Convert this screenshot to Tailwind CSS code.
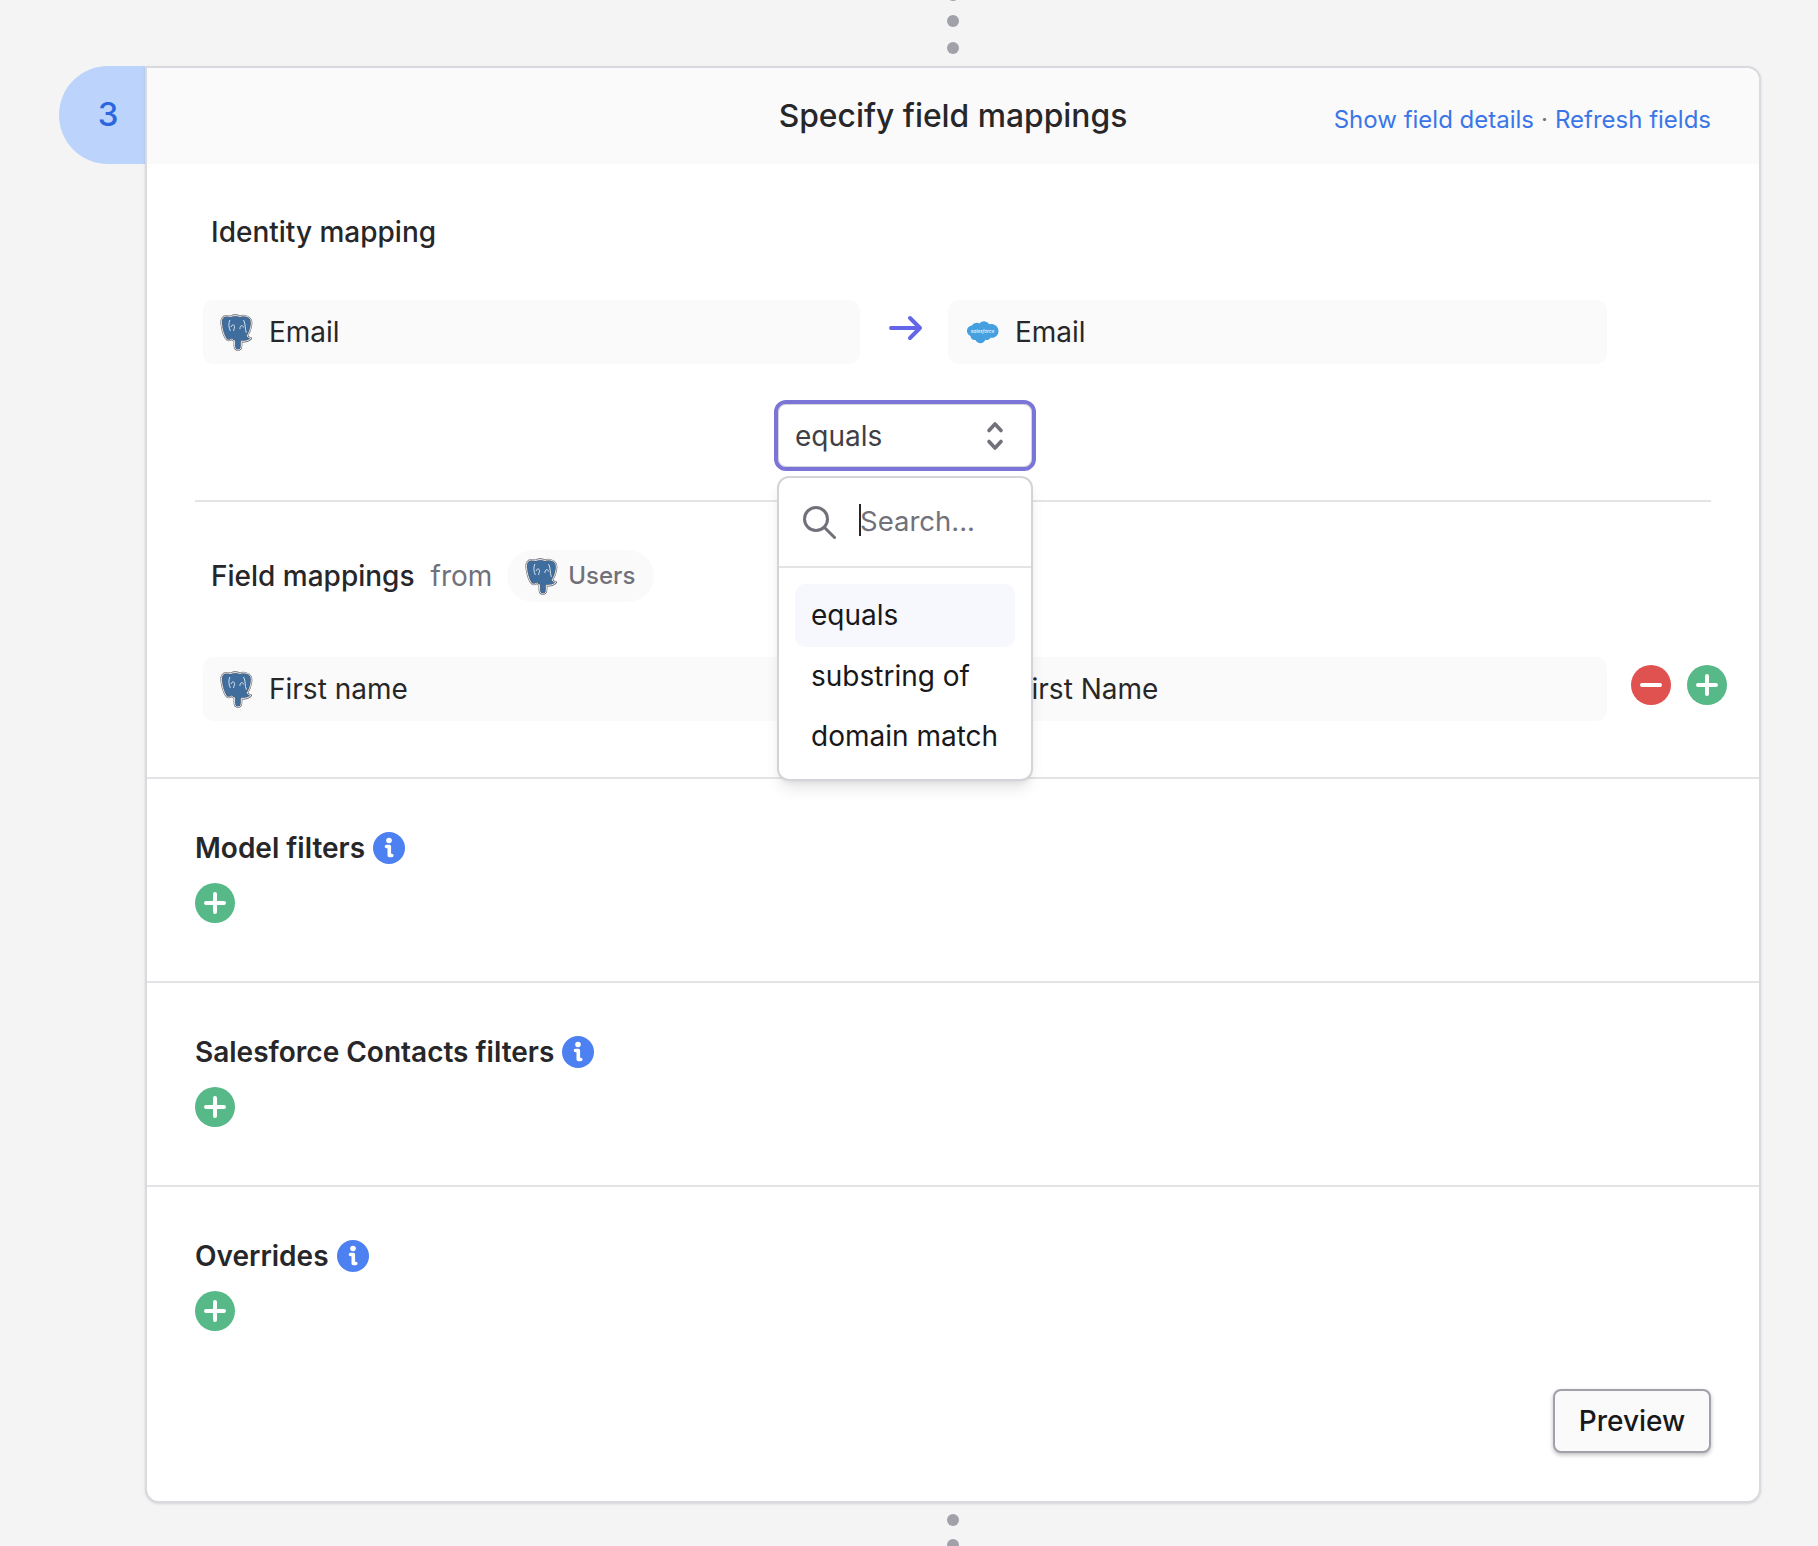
<!DOCTYPE html>
<html lang="en">
<head>
  <meta charset="UTF-8">
  <title>Specify field mappings</title>
  <script src="https://cdn.jsdelivr.net/npm/@tailwindcss/browser@4"></script>
</head>
<body class="bg-[#f4f4f4] font-['Inter',sans-serif] text-[#27272a] h-[1546px] overflow-hidden">
<!-- icon defs -->
<svg class="hidden">
  <symbol id="pg" viewBox="0 0 34 38">
    <path d="M7 2C3 2 1 5 1.500 10 2 15 3.500 21 6 25 7.500 27.500 10.500 27.500 12 25.500 13 27 14 27.500 15 27.500L15 32.500C15 35.500 16.500 37 18.500 37 20.500 37 22 35.500 22 32L22 28C25.500 28.500 30 27.500 32 25 30 24.500 28.500 24 28 22.500 31.500 17 33.500 9 31.500 5.500 29.500 2 24 1 20.500 2.500 17.500 1.200 13.500 1.200 11.500 2.500 10 2.200 8.500 2 7 2Z" fill="#3f6d9e" stroke="#5a5f6b" stroke-width="2" stroke-linejoin="round"/>
    <path d="M7 2C3 2 1 5 1.500 10 2 15 3.500 21 6 25 7.500 27.500 10.500 27.500 12 25.500 13 27 14 27.500 15 27.500L15 32.500C15 35.500 16.500 37 18.500 37 20.500 37 22 35.500 22 32L22 28C25.500 28.500 30 27.500 32 25 30 24.500 28.500 24 28 22.500 31.500 17 33.500 9 31.500 5.500 29.500 2 24 1 20.500 2.500 17.500 1.200 13.500 1.200 11.500 2.500 10 2.200 8.500 2 7 2Z" fill="none" stroke="#fff" stroke-width=".9" stroke-linejoin="round"/>
    <path d="M10 6.500C8.500 10 9 14 10.500 17M11.500 13C12 10.500 15 10.500 15 13 15 15 14 15.500 14 17M24.500 6.500C26.500 10 25.500 15 27 19M20.500 15C20.500 11 24 11 24 13.500" fill="none" stroke="#fff" stroke-width=".8" stroke-linecap="round"/>
  </symbol>
  <symbol id="plus" viewBox="0 0 40 40">
    <circle cx="20" cy="20" r="20" fill="#57b888"/>
    <path d="M20 11v18M11 20h18" stroke="#fff" stroke-width="4" stroke-linecap="round"/>
  </symbol>
  <symbol id="info" viewBox="0 0 32 32">
    <circle cx="16" cy="16" r="16" fill="#4d80f0"/>
    <circle cx="16" cy="8.500" r="2.800" fill="#fff"/>
    <path d="M13.500 14.500h2.800v9h2.500" fill="none" stroke="#fff" stroke-width="3.600" stroke-linecap="round" stroke-linejoin="round"/>
  </symbol>
</svg>

<!-- dots above -->
<div class="ml-[145px] w-[1616px] h-[66px] overflow-hidden flex flex-col items-center justify-end pb-[12px]">
  <span class="w-3 h-3 shrink-0 rounded-full bg-[#a1a1aa] mb-[14px]"></span>
  <span class="w-3 h-3 shrink-0 rounded-full bg-[#a1a1aa] mb-[15px]"></span>
  <span class="w-3 h-3 shrink-0 rounded-full bg-[#a1a1aa]"></span>
</div>

<div class="flex items-start pl-[59px]">
  <!-- step number -->
  <div class="w-[86px] h-[98px] shrink-0 bg-[#bcd4fb] rounded-l-[50px] flex items-center justify-center pl-[12px] text-[33px] font-medium text-[#2b66e0]">3</div>

  <!-- card -->
  <div class="w-[1616px] shrink-0 h-[1437px] bg-white border-2 border-[#d9d9df] rounded-r-[14px] rounded-bl-[14px] shadow-sm">
    <div class="relative h-[96px] bg-[#fafafa] rounded-tr-[14px] flex items-center justify-center">
      <h1 class="text-[31.800px] font-medium">Specify field mappings</h1>
      <div class="absolute right-[48px] top-[36px] text-[24px] leading-[32px] text-[#3b76e8]">Show field details<span class="text-[#71717a] mx-[7px]">·</span>Refresh fields</div>
    </div>

    <div class="relative px-[48px] h-[613px]">
      <h2 class="pl-[16px] pt-[50px] text-[28px] font-medium leading-[36px]">Identity mapping</h2>

      <div class="flex items-start mt-[50px] ml-[8px]">
        <div class="w-[657px] shrink-0 h-[64px] rounded-[10px] bg-[#fafafa] flex items-center pl-[17px] gap-[16px] text-[28px]">
          <svg class="w-[33px] h-[37px]"><use href="#pg"/></svg>Email
        </div>
        <div class="w-[88px] shrink-0 h-[64px] flex justify-center pt-[15px] pl-[3px]">
          <svg width="34" height="26" viewBox="0 0 34 26" fill="none" stroke="#6366e8" stroke-width="4" stroke-linecap="round" stroke-linejoin="round"><path d="M2 13h29M21 3l10 10-10 10"/></svg>
        </div>
        <div class="w-[659px] shrink-0 h-[64px] rounded-[10px] bg-[#fafafa] flex items-center pl-[18px] gap-[16px] text-[28px]">
          <svg width="33" height="24" viewBox="0 0 33 24" class="shrink-0">
            <path d="M13.500 3.500C15 1.800 17 1 19 1.400 21 1.800 22.500 3 23.300 4.200 27 3.200 32.500 5.500 32.500 11 32.500 16 28 18.500 24.500 17.700 23.500 19.700 21 20.600 19.300 19.800 18.500 22 16.500 23.500 14 23.300 11.500 23 10 21.500 9.500 20 7 20.500 4.500 18.500 4.500 16 2 15 .5 12.500 1 10 1.500 7 4 5.500 6 5.500 7.500 2.500 11.500 2 13.500 3.500Z" fill="#45a0e0"/>
            <text x="16.500" y="13" text-anchor="middle" font-size="4.800" fill="#fff" font-style="italic">salesforce</text>
          </svg>Email
        </div>
      </div>

      <!-- select + dropdown -->
      <div class="absolute left-[627px] top-[236px] w-[262px]">
        <div class="h-[71px] rounded-[12px] border-[4px] border-[#7c75d8] bg-white shadow-[inset_0_0_0_1px_#d4d4d8] flex items-center justify-between pl-[17px] pr-[28px] text-[28px] text-[#3f3f46]">
          equals
          <svg width="18" height="30" viewBox="0 0 18 30" fill="none" stroke="#71717a" stroke-width="3.600" stroke-linecap="round" stroke-linejoin="round"><path d="M3 9.500 9 3l6 6.500M3 20.500 9 27l6-6.500"/></svg>
        </div>
        <div class="absolute z-10 left-[3px] top-[76px] w-[256px] h-[305px] rounded-[12px] border-2 border-[#d4d4d8] bg-white shadow-lg">
          <div class="relative h-[90px] border-b-2 border-[#e4e4e7] flex items-center pl-[23px] gap-[24px] text-[27.500px] text-[#71717a]">
            <svg width="34" height="34" viewBox="0 0 34 34" fill="none" stroke="#71717a" stroke-width="3" stroke-linecap="round"><circle cx="14" cy="14" r="11.500"/><path d="m22.500 22.500 10 10"/></svg>
            <span class="relative">Search...<span class="absolute -left-[1px] top-[3px] w-[2px] h-[32px] bg-[#27272a]"></span></span>
          </div>
          <div class="px-[16px] pt-[16px] text-[28px] text-[#18181b]">
            <div class="h-[63px] rounded-[10px] bg-[#f7f8fd] flex items-center pl-[16px] pb-[2px]">equals</div>
            <div class="h-[60px] -mt-[1px] flex items-center pl-[16px]">substring of</div>
            <div class="h-[60px] flex items-center pl-[16px]">domain match</div>
          </div>
        </div>
      </div>

      <div class="mt-[136px] border-t-2 border-[#e4e4e7]"></div>

      <div class="flex items-center h-[52px] mt-[48px] pl-[16px] text-[28px]">
        <span class="font-medium">Field mappings</span>
        <span class="ml-[16px] text-[#71717a]">from</span>
        <span class="ml-[15px] h-[52px] pl-[18px] pr-[19px] rounded-full bg-[#fafafa] flex items-center gap-[10px] text-[24px] font-medium text-[#71717a]">
          <svg class="w-[33px] h-[37px]"><use href="#pg"/></svg>Users
        </span>
      </div>

      <div class="flex items-center mt-[55px] ml-[8px]">
        <div class="w-[657px] shrink-0 h-[64px] rounded-[10px] bg-[#fafafa] flex items-center pl-[17px] gap-[16px] text-[28px]">
          <svg class="w-[33px] h-[37px]"><use href="#pg"/></svg>First name
        </div>
        <div class="w-[88px] shrink-0 h-[64px]"></div>
        <div class="w-[659px] shrink-0 h-[64px] rounded-[10px] bg-[#fafafa] flex items-center pl-[67px] text-[28px]">First Name</div>
        <div class="flex items-center shrink-0 gap-[16px] ml-[24px] -mt-[8px]">
          <svg width="40" height="40" viewBox="0 0 40 40"><circle cx="20" cy="20" r="20" fill="#e0524f"/><path d="M11 20h18" stroke="#fff" stroke-width="4" stroke-linecap="round"/></svg>
          <svg class="w-10 h-10"><use href="#plus"/></svg>
        </div>
      </div>
    </div>

    <section class="h-[204px] border-t-2 border-[#e4e4e7] px-[48px] pt-[51px]">
      <h3 class="flex items-center gap-[8px] h-[36px] text-[28px] font-semibold">Model filters <svg class="w-8 h-8"><use href="#info"/></svg></h3>
      <svg class="w-10 h-10 mt-[17px]"><use href="#plus"/></svg>
    </section>
    <section class="h-[204px] border-t-2 border-[#e4e4e7] px-[48px] pt-[51px]">
      <h3 class="flex items-center gap-[8px] h-[36px] text-[28px] font-semibold">Salesforce Contacts filters <svg class="w-8 h-8"><use href="#info"/></svg></h3>
      <svg class="w-10 h-10 mt-[17px]"><use href="#plus"/></svg>
    </section>
    <section class="border-t-2 border-[#e4e4e7] px-[48px] pt-[51px]">
      <h3 class="flex items-center gap-[8px] h-[36px] text-[28px] font-semibold">Overrides <svg class="w-8 h-8"><use href="#info"/></svg></h3>
      <svg class="w-10 h-10 mt-[17px]"><use href="#plus"/></svg>
      <div class="flex justify-end mt-[58px]">
        <button class="w-[158px] h-[64px] rounded-[8px] border-2 border-[#a1a1aa] bg-[#fafafa] shadow-[0_2px_4px_rgba(0,0,0,0.25)] text-[28px] font-medium text-[#18181b]">Preview</button>
      </div>
    </section>
  </div>
</div>

<!-- dots below -->
<div class="ml-[145px] w-[1616px] flex flex-col items-center gap-[13px] pt-[11px]">
  <span class="w-3 h-3 shrink-0 rounded-full bg-[#a1a1aa]"></span>
  <span class="w-3 h-3 shrink-0 rounded-full bg-[#a1a1aa]"></span>
</div>
</body>
</html>
